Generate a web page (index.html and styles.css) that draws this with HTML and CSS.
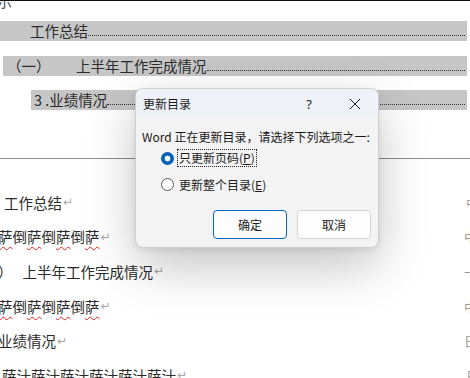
FILE: index.html
```html
<!DOCTYPE html>
<html lang="zh-CN">
<head>
  <meta charset="UTF-8">
  <meta name="viewport" content="width=device-width, initial-scale=1.0">
  <title>更新目录</title>
  <link rel="stylesheet" href="styles.css">
</head>
<body>

  <div class="doc">
    <div class="sheet-top"><span class="cut-glyph">示</span></div>

    <!-- Table of contents -->
    <div class="toc">
      <div class="toc-row level1"><span>工作总结</span><span class="leader"></span></div>
      <div class="toc-row level2"><span class="num">（一）</span><span>上半年工作完成情况</span><span class="leader"></span></div>
      <div class="toc-row level3"><span>3 .业绩情况</span><span class="leader"></span></div>
    </div>

    <div class="page-break"></div>

    <!-- Body text -->
    <div class="body-text">
      <p class="para indent1">工作总结<span class="mark">↵</span><span class="edge">中</span></p>
      <p class="para shift"><span class="typo">萨</span>倒<span class="typo">萨</span>倒<span class="typo">萨</span>倒<span class="typo">萨</span><span class="mark">↵</span><span class="edge">中</span></p>
      <p class="para shift">）<span class="gap"></span>上半年工作完成情况<span class="mark">↵</span><span class="edge">一</span></p>
      <p class="para shift"><span class="typo">萨</span>倒<span class="typo">萨</span>倒<span class="typo">萨</span>倒<span class="typo">萨</span><span class="mark">↵</span><span class="edge">中</span></p>
      <p class="para shift">业绩情况<span class="mark">↵</span><span class="edge">日</span></p>
      <p class="para indent0">萨汁萨汁萨汁萨汁萨汁萨汁<span class="mark">↵</span><span class="edge">日</span></p>
    </div>
  </div>

  <!-- Update TOC dialog -->
  <div class="dialog">
    <div class="dialog-title">
      <span class="title-text">更新目录</span>
      <span class="title-btn">?</span>
      <span class="title-btn">
        <svg width="12" height="12" viewBox="0 0 12 12"><path d="M1 1L11 11M11 1L1 11" stroke="#1a1a1a" stroke-width="1" fill="none"/></svg>
      </span>
    </div>
    <div class="dialog-body">
      <div class="message">Word 正在更新目录，请选择下列选项之一:</div>
      <div class="options">
        <label class="option"><span class="radio checked"></span><span class="focus">只更新页码(<u>P</u>)</span></label>
        <label class="option"><span class="radio"></span><span class="plain">更新整个目录(<u>E</u>)</span></label>
      </div>
      <div class="buttons">
        <button class="btn primary">确定</button>
        <button class="btn">取消</button>
      </div>
    </div>
  </div>

</body>
</html>
```

FILE: styles.css
```css
/* Page */
body {
  margin: 0;
  width: 470px;
  height: 378px;
  overflow: hidden;
  position: relative;
  background: #fff;
  font-family: "Noto Sans CJK SC", "Noto Sans", sans-serif;
  color: #2b2b2b;
}

.doc {
  width: 470px;
}

.sheet-top {
  height: 21px;
  border-top: 1px solid #111;
  box-sizing: border-box;
  overflow: hidden;
}

.cut-glyph {
  display: block;
  font-size: 15px;
  line-height: 15px;
  margin-top: -8px;
  margin-left: -3px;
  color: #555;
}

/* Table of contents */
.toc {
  display: flex;
  flex-direction: column;
  gap: 14.5px;
}

.toc-row {
  display: flex;
  height: 20px;
  line-height: 20px;
  font-size: 14.5px;
  background: #c6c6c6;
  color: #2b2b2b;
  margin-right: 3px;
}

.toc-row.level1 {
  padding-left: 30px;
}

.toc-row.level2 {
  margin-left: 3px;
  padding-left: 4px;
}

.toc-row.level2 .num {
  width: 69px;
}

.toc-row.level3 {
  margin-left: 31px;
  padding-left: 3px;
}

.leader {
  flex: 1;
  height: 0;
  margin-top: 14px;
  margin-right: 2px;
  border-bottom: 1px dotted #333;
}

.page-break {
  margin-top: 48px;
  height: 1px;
  background: #8c8c8c;
}

/* Body text */
.body-text {
  padding-top: 26px;
}

.para {
  margin: 0;
  display: flex;
  align-items: center;
  height: 34.6px;
  font-size: 14.5px;
  white-space: nowrap;
  position: relative;
}

.para.indent1 {
  padding-left: 4px;
}

.para.indent0 {
  padding-left: 2px;
}

.para.shift {
  margin-left: -2px;
}

.gap {
  display: inline-block;
  width: 10px;
}

.typo {
  text-decoration: underline wavy #e02020;
  text-decoration-thickness: 1px;
  text-underline-offset: 3px;
}

.mark {
  color: #a8a8a8;
  font-size: 12px;
  font-family: "DejaVu Sans", sans-serif;
  margin-left: 1px;
}

.edge {
  position: absolute;
  left: 466px;
  color: #9a9a9a;
  font-size: 13px;
}

/* Dialog */
.dialog {
  position: absolute;
  left: 135px;
  top: 88px;
  width: 244px;
  height: 160px;
  box-sizing: border-box;
  border: 1px solid #cfcfcf;
  border-radius: 8px;
  background: #f3f3f3;
  box-shadow: 0 18px 50px rgba(0, 0, 0, 0.24), 0 2px 6px rgba(0, 0, 0, 0.08);
  overflow: hidden;
  font-size: 12px;
  color: #1a1a1a;
}

.dialog-title {
  display: flex;
  align-items: center;
  height: 29px;
  background: #eef1f7;
}

.title-text {
  flex: 1;
  padding-left: 7px;
}

.title-btn {
  width: 46px;
  display: flex;
  justify-content: center;
  align-items: center;
  font-size: 13px;
  font-family: "Noto Sans", sans-serif;
}

.dialog-body {
  padding: 11px 7px 0 6px;
}

.message {
  line-height: 16px;
  white-space: nowrap;
}

.options {
  margin-top: 3px;
  margin-left: 19px;
  display: flex;
  flex-direction: column;
  gap: 6px;
}

.option {
  display: flex;
  align-items: center;
  height: 20px;
  gap: 3px;
}

.radio {
  width: 11px;
  height: 11px;
  border: 1px solid #5c5c5c;
  border-radius: 50%;
  background: #fff;
  box-sizing: content-box;
}

.radio.checked {
  width: 13px;
  height: 13px;
  border: none;
  background: radial-gradient(circle, #fff 0 2.6px, #005fb8 3.2px);
}

.focus {
  border: 1px dotted #222;
  padding: 0 1px;
  line-height: 16px;
}

.plain {
  padding: 0 2px;
}

.buttons {
  margin-top: 16px;
  display: flex;
  justify-content: flex-end;
  gap: 10px;
}

.btn {
  width: 74px;
  height: 29px;
  border: 1px solid #d3d3d3;
  border-radius: 4px;
  background: #fdfdfd;
  font-family: "Noto Sans CJK SC", sans-serif;
  font-size: 12px;
  color: #1a1a1a;
  padding: 0;
}

.btn.primary {
  border-color: #0067c0;
}
```
